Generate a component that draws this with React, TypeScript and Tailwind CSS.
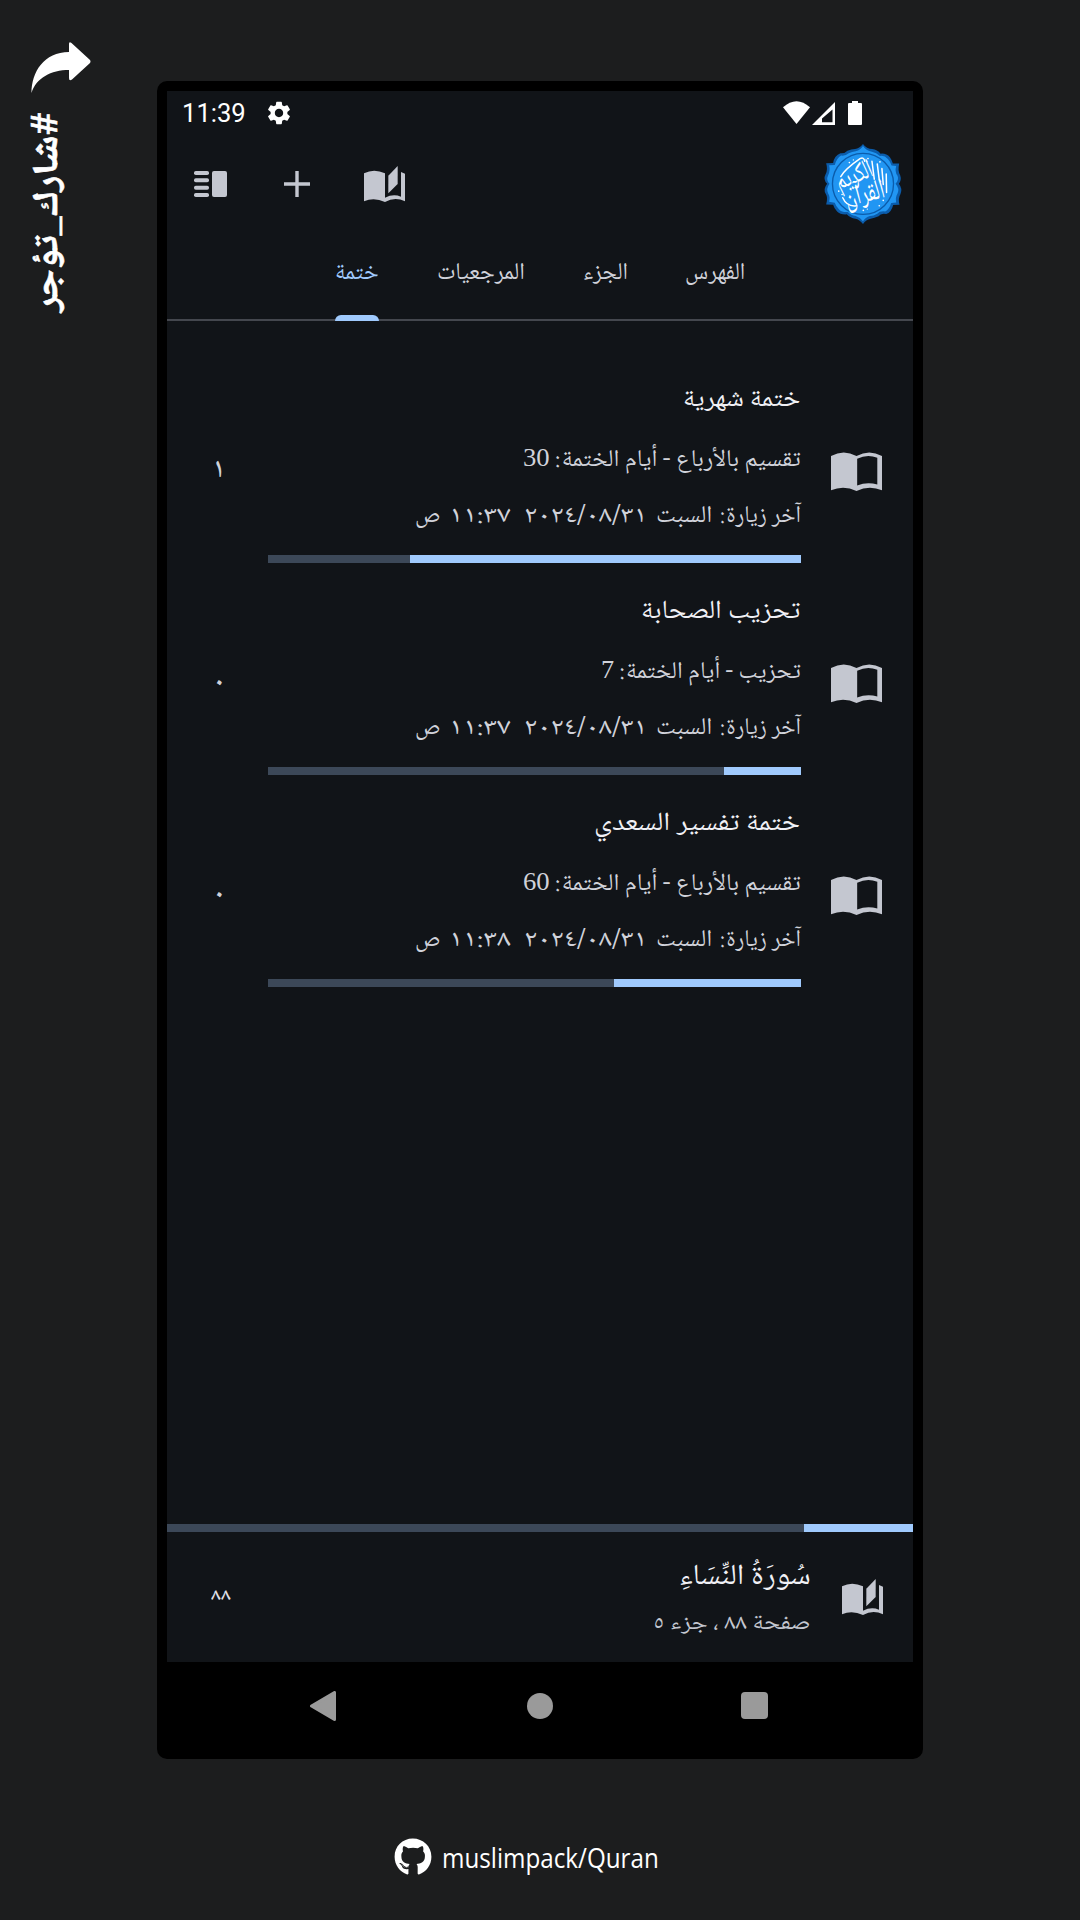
import { useLayoutEffect, useRef, useState, type ReactNode } from "react";
import { FaGithub } from "react-icons/fa";
import { MdSettings } from "react-icons/md";

/* Single line of text squeezed or stretched horizontally to the width of its box. */
function Fit({ className, dir = "rtl", children }: { className: string; dir?: "rtl" | "ltr"; children: ReactNode }) {
  const box = useRef<HTMLDivElement>(null);
  const line = useRef<HTMLSpanElement>(null);
  const [scale, setScale] = useState(1);
  useLayoutEffect(() => {
    if (box.current && line.current && line.current.offsetWidth > 0) {
      setScale(box.current.clientWidth / line.current.offsetWidth);
    }
  }, []);
  return (
    <div ref={box} dir={dir} className={"flex shrink-0 " + className}>
      <span
        ref={line}
        className={"inline-block shrink-0 whitespace-pre " + (dir === "rtl" ? "origin-right" : "origin-left")}
        style={{ transform: `scaleX(${scale})` }}
      >
        {children}
      </span>
    </div>
  );
}

function OpenBook() {
  return (
    <svg viewBox="0 0 152 116" className="h-[39px] w-[51px] fill-[#c4c7d0]">
      <path
        fillRule="evenodd"
        d="M0 114V12Q38-9 76 12Q114-9 152 12V114Q114 98 76 116Q38 98 0 114ZM78 20Q108 5 138 17V97Q108 87 78 100Z"
      />
    </svg>
  );
}

function ReadingBook() {
  return (
    <svg viewBox="0 0 123 108" className="h-9 w-[41px] fill-[#c4c7d0]">
      <path d="M0 106V22Q30 6 63 22V95Q88 82 111 92V18L123 23V106Q93 91 63 108Q30 93 0 106Z" />
      <path d="M73 29L101 0V54L73 82Z" />
    </svg>
  );
}

function Medallion() {
  return (
    <svg viewBox="0 0 234 241" className="h-20 w-[78px] overflow-visible">
      <path
        fill="#0b5cab"
        d="M117 0Q128 15 145 15Q160 17 170 29Q187 27 198 40Q205 50 207 59L226 59Q221 83 229 94Q234 108 225 120Q237 135 230 151Q222 164 227 183L208 184Q202 207 187 211Q170 208 164 218Q151 224 140 225Q126 228 117 241Q106 227 94 225Q79 224 68 212Q48 213 39 203Q29 192 27 183L6 182Q12 162 5 151Q-4 136 9 120Q-4 107 4 92Q12 78 6 58L27 57Q31 35 49 28Q62 29 70 20Q82 16 93 15Q106 13 117 0Z"
      />
      <path
        fill="#2196f3"
        d="M117 6Q126 20 144 23Q157 25 168 36Q181 33 192 45Q200 54 203 65L217 66Q212 84 221 96Q226 108 215 120Q228 135 221 149Q214 160 217 176L202 178Q196 198 184 203Q167 201 160 210Q149 217 138 217Q124 221 117 233Q109 221 95 217Q81 216 71 205Q53 206 45 197Q35 187 32 177L15 174Q19 159 12 149Q5 135 16 120Q5 108 12 94Q19 80 15 64L32 63Q38 43 51 35Q64 37 74 28Q84 23 95 22Q110 18 117 6Z"
      />
      <circle cx="117" cy="120" r="92" fill="#2196f3" stroke="#0b5cab" strokeWidth="4" />
      <g fill="#ffffff" className="font-['Noto_Naskh_Arabic','DejaVu_Sans',sans-serif]" textAnchor="middle">
        <text transform="translate(98 116) rotate(-22) scale(.84 1.35)" fontSize="62">الكريم</text>
        <text transform="translate(127 174) rotate(-14) scale(.92 1.35)" fontSize="64">القرآن</text>
      </g>
      <g fill="none" stroke="#ffffff" strokeWidth="4.500" strokeLinecap="round">
        <path d="M50 98Q62 76 108 44Q120 38 122 52" />
        <path d="M144 52L151 106M160 60L166 108M174 74L178 122M187 90L188 146" />
        <path d="M56 162Q68 190 98 186" />
      </g>
      <g fill="#ffffff">
        <circle cx="76" cy="56" r="2.5" />
        <circle cx="88" cy="48" r="2" />
        <circle cx="132" cy="44" r="2.5" />
        <circle cx="168" cy="54" r="2.5" />
        <circle cx="44" cy="142" r="2.5" />
        <circle cx="54" cy="152" r="2.5" />
        <circle cx="166" cy="186" r="2.5" />
        <circle cx="178" cy="170" r="2.5" />
        <circle cx="118" cy="200" r="2.5" />
        <circle cx="130" cy="196" r="2" />
      </g>
    </svg>
  );
}

function StatusBar() {
  return (
    <div className="flex h-11 items-center pl-[15px]">
      <Fit dir="ltr" className="w-16 font-['Roboto',sans-serif] text-[26px] leading-[45px] text-white">11:39</Fit>
      <MdSettings className="ml-[19px] size-7 text-white" />
      <svg viewBox="0 0 80 24" className="ml-[490px] h-6 w-20 fill-white">
        <path d="M0 6.3Q13.500-6 27 6.300L13.500 23Z" />
        <path fillRule="evenodd" d="M29 24L52 1V24ZM39 21.300H49.500V8.500L39 17.500Z" />
        <path d="M69 0H75V2H78Q79 2 79 3V23Q79 24 78 24H66Q65 24 65 23V3Q65 2 66 2H69Z" />
      </svg>
    </div>
  );
}

function Toolbar() {
  return (
    <div className="flex h-[99px] items-center pr-[11px] pb-px pl-[27px]">
      <svg viewBox="0 0 33 26" className="h-[26px] w-[33px] fill-[#c4c7d0]">
        <rect x="0" y="0" width="15" height="4" rx="1.800" />
        <rect x="0" y="7.300" width="15" height="4" rx="1.800" />
        <rect x="0" y="14.700" width="15" height="4" rx="1.800" />
        <rect x="0" y="22" width="15" height="4" rx="1.800" />
        <rect x="18" y="0" width="15" height="26" rx="2" />
      </svg>
      <svg viewBox="0 0 26 26" className="ml-[57px] size-[26px] fill-[#c4c7d0]">
        <path d="M11.300 0H14.700V11.300H26V14.700H14.700V26H11.300V14.700H0V11.300H11.300Z" />
      </svg>
      <div className="ml-[54px]">
        <ReadingBook />
      </div>
      <div className="ml-auto">
        <Medallion />
      </div>
    </div>
  );
}

const TABS = [
  { label: "الفهرس", width: "w-[60px]", active: false },
  { label: "الجزء", width: "w-[45px]", active: false },
  { label: "المرجعيات", width: "w-[88px]", active: false },
  { label: "ختمة", width: "w-[44px]", active: true },
];

function Tabs() {
  return (
    <div dir="rtl" className="flex h-[87px] justify-center gap-[58px] border-b-2 border-[#44474e]">
      {TABS.map((t) => (
        <div key={t.label} className="relative h-full pt-0.5">
          <Fit className={"h-[76px] text-[24px] leading-[76px] " + t.width + (t.active ? " text-[#a0cafd]" : " text-[#d0d2da]")}>
            {t.label}
          </Fit>
          {t.active && <div className="absolute inset-x-0 -bottom-0.5 h-1.5 rounded-t-md bg-[#a0cafd]" />}
        </div>
      ))}
    </div>
  );
}

const KHATMAS = [
  {
    title: "ختمة شهرية",
    titleW: "w-[117px]",
    info: "تقسيم بالأرباع - أيام الختمة\u200a: ",
    days: "30",
    infoW: "w-[278px]",
    time: "١١:٣٧",
    fill: "w-[391px]",
    count: "١",
  },
  {
    title: "تحزيب الصحابة",
    titleW: "w-[159px]",
    info: "تحزيب - أيام الختمة\u200a: ",
    days: "7",
    infoW: "w-[200px]",
    time: "١١:٣٧",
    fill: "w-[77px]",
    count: "٠",
  },
  {
    title: "ختمة تفسير السعدي",
    titleW: "w-[206px]",
    info: "تقسيم بالأرباع - أيام الختمة\u200a: ",
    days: "60",
    infoW: "w-[278px]",
    time: "١١:٣٨",
    fill: "w-[187px]",
    count: "٠",
  },
];

function KhatmaRow({ k }: { k: (typeof KHATMAS)[number] }) {
  return (
    <div dir="rtl" className="flex h-[212px] pr-[31px] pl-[45px]">
      <div className="mt-[87px] w-[51px]">
        <OpenBook />
      </div>
      <div className="mr-[30px] w-[533px] pt-[15px]">
        <Fit className={"mr-px h-10 text-[26px] leading-10 text-[#f0f0f5] " + k.titleW}>{k.title}</Fit>
        <Fit className={"mt-[21px] h-10 text-[24px] leading-10 text-[#d0d2da] " + k.infoW}>
          {k.info}
          <span className="font-['Liberation_Serif',serif] text-[26px] leading-none">{k.days}</span>
        </Fit>
        <div className="mt-4 flex h-10 text-[24px] leading-10 text-[#d0d2da]">
          <Fit className="w-[81px]">{"آخر زيارة\u200a:"}</Fit>
          <Fit className="mr-2 w-14">السبت</Fit>
          <Fit className="mr-[9px] w-[123px]">٢٠٢٤/٠٨/٣١</Fit>
          <Fit className="mr-[13px] w-[62px]">{k.time}</Fit>
          <Fit className="mr-[9px] w-[25px]">ص</Fit>
        </div>
        <div className="mt-[18px] h-2 bg-[#3c4858]">
          <div className={"h-full bg-[#a0cafd] " + k.fill} />
        </div>
      </div>
      <div className="mt-[86px] mr-auto -ml-px w-4 text-center text-[28px] leading-10 font-medium text-[#d0d2da]">{k.count}</div>
    </div>
  );
}

function LastRead() {
  return (
    <div>
      <div dir="rtl" className="h-2 bg-[#3c4858]">
        <div className="h-full w-[109px] bg-[#a0cafd]" />
      </div>
      <div dir="rtl" className="flex h-[130px] pr-[30px] pl-11">
        <div className="mt-[47px]">
          <ReadingBook />
        </div>
        <div className="mr-[31px] pt-[22px]">
          <Fit className="h-12 w-[132px] text-[29px] leading-[48px] text-[#f0f0f5]">سُورَةُ النِّسَاءِ</Fit>
          <Fit className="mt-0.5 h-10 w-[158px] text-[22px] leading-10 text-[#c4c7d0]">صفحة ٨٨ ، جزء ٥</Fit>
        </div>
        <Fit className="mt-[45px] mr-auto h-10 w-5 text-[17px] leading-10 font-medium text-[#e0e2ea]">٨٨</Fit>
      </div>
    </div>
  );
}

function NavBar() {
  return (
    <div className="flex h-[87px] items-center pl-[143px] text-[#9a9a9a]">
      <svg viewBox="0 0 26 30" className="h-[30px] w-[26px]">
        <path d="M1.500 15L24.500 1.500V28.500Z" fill="currentColor" stroke="currentColor" strokeWidth="3" strokeLinejoin="round" />
      </svg>
      <div className="ml-[191px] size-[26px] rounded-full bg-[#9a9a9a]" />
      <div className="ml-[188px] size-[27px] rounded-sm bg-[#9a9a9a]" />
    </div>
  );
}

export default function App() {
  return (
    <div className="flex h-[1920px] w-[1080px] overflow-hidden bg-[#1c1d1e] font-['Noto_Naskh_Arabic','Amiri','Scheherazade_New','DejaVu_Sans',sans-serif]">
      <div className="w-[157px] shrink-0 pt-[42px]">
        <svg viewBox="0 0 60 52" className="ml-[31px] h-[52px] w-[60px]">
          <path
            d="M0.500 51C0.500 30 13 10 38 10V2Q38-1 40.500 1L59 18Q60 19.500 59 21L41 37.500Q38 39.500 38 36V28C20 28 5 36 0.500 51Z"
            fill="#ffffff"
          />
        </svg>
        <div className="mt-[18px] ml-[30px] flex h-[200px] w-10 items-center justify-center">
          <Fit className="h-10 w-[200px] -rotate-90 text-[36px] leading-10 font-bold text-white [-webkit-text-stroke:0.6px_white]">#شارك_تؤجر</Fit>
        </div>
      </div>
      <div className="flex w-[766px] shrink-0 flex-col items-center pt-[81px]">
        <div className="flex h-[1678px] w-full flex-col rounded-[10px] bg-black p-[10px] pb-0">
          <div className="flex h-[1571px] shrink-0 flex-col bg-[#111418]">
            <StatusBar />
            <Toolbar />
            <Tabs />
            <div className="flex-1 pt-11">
              {KHATMAS.map((k) => (
                <KhatmaRow key={k.title} k={k} />
              ))}
            </div>
            <LastRead />
          </div>
          <NavBar />
        </div>
        <div className="mt-20 mr-[27px] flex h-9 items-center">
          <FaGithub className="size-[38px] text-white" />
          <Fit dir="ltr" className="ml-2.5 w-[217px] font-['Open_Sans',sans-serif] text-[28px] leading-8 text-white">
            muslimpack/Quran
          </Fit>
        </div>
      </div>
    </div>
  );
}
